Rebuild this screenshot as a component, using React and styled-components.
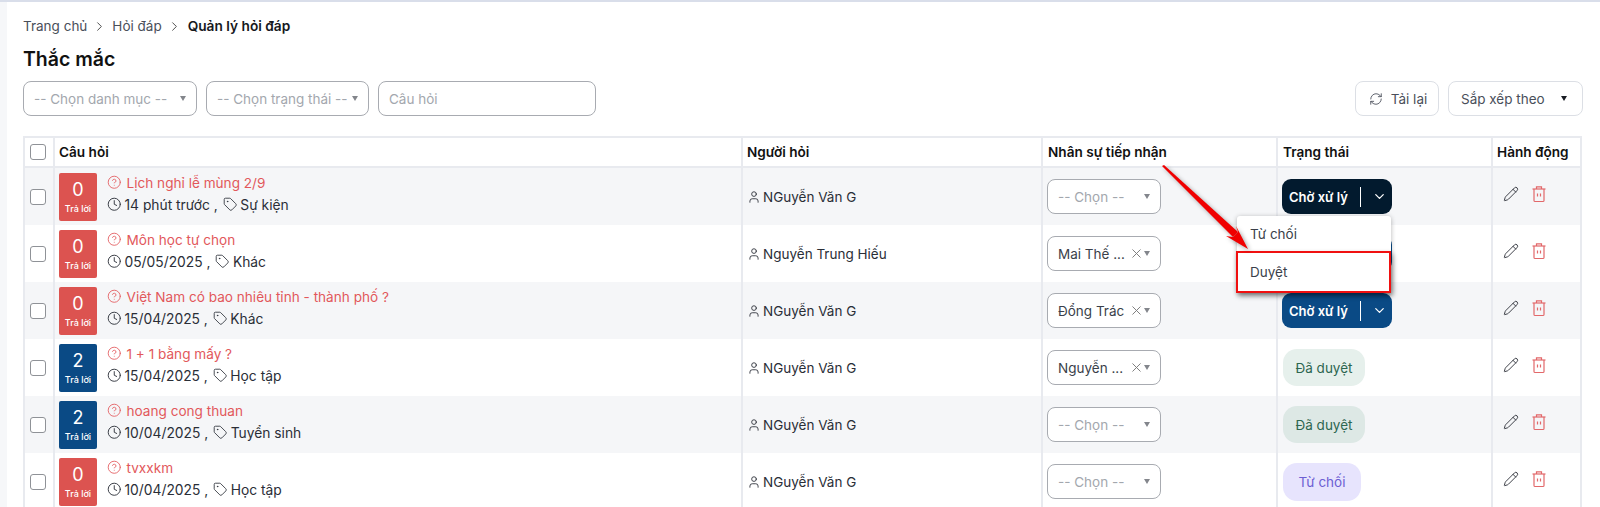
import styled, { createGlobalStyle } from 'styled-components';
import { ChevronDown, ChevronRight, CircleHelp, Clock, Pencil, RefreshCw, Tag, User, X } from 'lucide-react';

const GlobalStyle = createGlobalStyle`
  html, body {
    margin: 0;
    background: #fff;
    font-family: Inter, "Noto Sans", sans-serif;
    color: #1f2430;
  }
  * { box-sizing: border-box; }
`;

const Page = styled.div`
  position: relative;
  display: flex;
  height: 507px;
  overflow: hidden;
  border-top: 2px solid #d9deea;
`;

const SideStrip = styled.div`
  width: 7px;
  flex: none;
  background: #f6f7f9;
`;

const Main = styled.main`
  flex: 1;
  min-width: 0;
  padding: 15px 17px 0 16px;
`;

const Breadcrumb = styled.nav`
  display: flex;
  align-items: center;
  gap: 5px;
  height: 18px;
  font-size: 13.5px;
  color: #4a4f5a;
  svg { color: #444; }
`;

const Current = styled.span`
  margin-left: 1px;
  font-size: 13.7px;
  font-weight: 600;
  color: #16181d;
`;

const Title = styled.h1`
  margin: 11px 0 0;
  height: 26px;
  font-size: 19.5px;
  line-height: 26px;
  font-weight: 600;
  color: #111;
`;

const Toolbar = styled.div`
  display: flex;
  justify-content: space-between;
  margin-top: 9px;
`;

const ToolGroup = styled.div`
  display: flex;
  gap: 9px;
`;

const Field = styled.div`
  display: flex;
  align-items: center;
  justify-content: space-between;
  width: ${({ $w }) => $w}px;
  height: 35px;
  padding: 0 10px;
  border: 1px solid #a8abb1;
  border-radius: 8px;
  background: #fff;
  font-size: 13.5px;
  color: #a3a7ae;
  white-space: nowrap;
`;

const Caret = styled.span`
  flex: none;
  width: 0;
  height: 0;
  border-left: 3.5px solid transparent;
  border-right: 3.5px solid transparent;
  border-top: 5px solid ${({ $dark }) => ($dark ? '#1a1d24' : '#83868c')};
`;

const ToolButton = styled.button`
  display: flex;
  align-items: center;
  gap: 8px;
  height: 35px;
  width: ${({ $w }) => $w}px;
  padding: 0 ${({ $between }) => ($between ? 15 : 10)}px 0 12px;
  border: 1px solid #dcdfe5;
  border-radius: 8px;
  background: #fff;
  font: inherit;
  font-size: 13.5px;
  color: #4a4f5a;
  white-space: nowrap;
  justify-content: ${({ $between }) => ($between ? 'space-between' : 'center')};
`;

const Table = styled.div`
  width: 1559px;
  margin-top: 20px;
  border: solid #e8eaef;
  border-width: 2px 2px 0;
`;

const Row = styled.div`
  display: grid;
  grid-template-columns: 28px 688px 300px 235px 215px 89px;
  height: ${({ $head }) => ($head ? 28 : 57)}px;
  background: ${({ $shade }) => ($shade ? '#f5f6f8' : '#fff')};
  border-bottom: ${({ $head }) => ($head ? '2px solid #e8eaef' : 'none')};
  box-sizing: content-box;
`;

const Cell = styled.div`
  position: relative;
  display: flex;
  align-items: center;
  min-width: 0;
  padding-left: ${({ $pl }) => $pl ?? 4}px;
  border-left: ${({ $first }) => ($first ? 'none' : '2px solid #e8eaef')};
`;

const HeadText = styled.span`
  font-size: 13.6px;
  font-weight: 600;
  color: #111;
  white-space: nowrap;
`;

const Check = styled.span`
  width: 16px;
  height: 16px;
  border: 1px solid #8f9297;
  border-radius: 3px;
  background: #fff;
`;

const Badge = styled.div`
  display: flex;
  flex-direction: column;
  align-items: center;
  flex: none;
  width: 38px;
  height: 48px;
  padding-top: 6px;
  border-radius: 2px;
  color: #fff;
  background: ${({ $answered }) => ($answered ? '#0a4a85' : '#dc5350')};
`;

const Count = styled.span`
  font-size: 18px;
  line-height: 22px;
`;

const CountLabel = styled.span`
  margin-top: 2px;
  font-size: 9px;
  font-weight: 500;
  line-height: 12px;
`;

const Question = styled.div`
  display: flex;
  flex-direction: column;
  gap: 6px;
  margin: 0 0 6px 10px;
`;

const QuestionTitle = styled.div`
  display: flex;
  align-items: center;
  gap: 5px;
  height: 16px;
  font-size: 13.6px;
  color: #e2585b;
  white-space: nowrap;
`;

const Meta = styled.div`
  display: flex;
  align-items: center;
  height: 16px;
  font-size: 13.8px;
  color: #2a2e37;
  white-space: nowrap;
  svg { flex: none; }
`;

const MetaGap = styled.span`
  margin: 0 5px 0 3px;
`;

const Asker = styled.div`
  display: flex;
  align-items: center;
  gap: 2px;
  font-size: 13.5px;
  color: #2a2e37;
  white-space: nowrap;
`;

const PickText = styled.span`
  flex: 1;
  color: ${({ $empty }) => ($empty ? '#a3a7ae' : '#3a3f4a')};
`;

const StatusWrap = styled.div`
  position: relative;
`;

const StatusButton = styled.div`
  display: flex;
  align-items: center;
  width: 110px;
  height: 35px;
  padding-left: 7px;
  border-radius: 9px;
  background: ${({ $active }) => ($active ? '#021a2e' : '#0a4a85')};
  color: #fff;
  font-size: 13px;
  font-weight: 600;
  white-space: nowrap;
`;

const Divider = styled.span`
  width: 1px;
  height: 20px;
  margin: 0 11px 0 12px;
  background: #fff;
`;

const Pill = styled.span`
  display: flex;
  align-items: center;
  justify-content: center;
  width: ${({ $kind }) => ($kind === 'rejected' ? 78 : 82)}px;
  height: ${({ $kind }) => ($kind === 'rejected' ? 38 : 37)}px;
  margin-left: 1px;
  border-radius: 14px;
  font-size: 13.5px;
  background: ${({ $kind, $shade }) => {
    if ($kind === 'rejected') return '#e7e4fd';
    return $shade ? '#dde8e5' : '#e6f0ec';
  }};
  color: ${({ $kind }) => ($kind === 'rejected' ? '#6d5fd3' : '#2d6650')};
`;

const Menu = styled.div`
  position: absolute;
  top: 37px;
  left: -45px;
  z-index: 3;
  width: 154px;
  background: #fff;
  border-radius: 3px;
  box-shadow: 0 1px 5px rgba(0, 0, 0, 0.3);
`;

const MenuItem = styled.div`
  display: flex;
  align-items: center;
  height: ${({ $boxed }) => ($boxed ? 42 : 35)}px;
  padding-left: ${({ $boxed }) => ($boxed ? 12 : 13)}px;
  font-size: 13.5px;
  color: #3a3f4a;
  ${({ $boxed }) =>
    $boxed &&
    `
    margin-left: -1px;
    width: 155px;
    background: #fff;
    border: 2px solid #f01010;
    box-shadow: 2px 3px 5px rgba(0, 0, 0, 0.4);
  `}
`;

const Actions = styled.div`
  display: flex;
  align-items: center;
  gap: 12px;
  margin: -6px 0 0 6px;
  color: #30343c;
`;

const TrashIcon = styled.svg`
  color: #e2686a;
`;

const ArrowMark = styled.svg`
  position: absolute;
  left: 1155px;
  top: 158px;
  z-index: 5;
  filter: drop-shadow(2px 2px 2px rgba(0, 0, 0, 0.35));
`;

const rows = [
  { n: 0, q: 'Lịch nghỉ lễ mùng 2/9', time: '14 phút trước', tag: 'Sự kiện', who: 'NGuyễn Văn G', pick: '', status: 'active' },
  { n: 0, q: 'Môn học tự chọn', time: '05/05/2025', tag: 'Khác', who: 'Nguyễn Trung Hiếu', pick: 'Mai Thế ...', status: 'pending' },
  { n: 0, q: 'Việt Nam có bao nhiêu tỉnh - thành phố ?', time: '15/04/2025', tag: 'Khác', who: 'NGuyễn Văn G', pick: 'Đổng Trác', status: 'pending' },
  { n: 2, q: '1 + 1 bằng mấy ?', time: '15/04/2025', tag: 'Học tập', who: 'NGuyễn Văn G', pick: 'Nguyễn ...', status: 'approved' },
  { n: 2, q: 'hoang cong thuan', time: '10/04/2025', tag: 'Tuyển sinh', who: 'NGuyễn Văn G', pick: '', status: 'approved' },
  { n: 0, q: 'tvxxkm', time: '10/04/2025', tag: 'Học tập', who: 'NGuyễn Văn G', pick: '', status: 'rejected' },
];

function Trash() {
  return (
    <TrashIcon width="16" height="18" viewBox="0 0 16 18" fill="none" stroke="currentColor" strokeWidth="1.2">
      <path d="M1.5 4h13" />
      <path d="M5.5 4V1.8h5V4" />
      <path d="M3 4v11.4q0 1.1 1.1 1.1h7.8q1.1 0 1.1-1.1V4" />
      <path d="M6.5 8.5v3M9.5 8.5v3" />
    </TrashIcon>
  );
}

function Status({ row, shade }) {
  if (row.status === 'approved') return <Pill $shade={shade}>Đã duyệt</Pill>;
  if (row.status === 'rejected') return <Pill $kind="rejected">Từ chối</Pill>;
  return (
    <StatusWrap>
      <StatusButton $active={row.status === 'active'}>
        Chờ xử lý
        <Divider />
        <ChevronDown size={15} strokeWidth={2} />
      </StatusButton>
      {row.status === 'active' && (
        <Menu>
          <MenuItem>Từ chối</MenuItem>
          <MenuItem $boxed>Duyệt</MenuItem>
        </Menu>
      )}
    </StatusWrap>
  );
}

export default function App() {
  return (
    <Page>
      <GlobalStyle />
      <SideStrip />
      <Main>
        <Breadcrumb>
          <span>Trang chủ</span>
          <ChevronRight size={15} strokeWidth={1.5} />
          <span>Hỏi đáp</span>
          <ChevronRight size={15} strokeWidth={1.5} />
          <Current>Quản lý hỏi đáp</Current>
        </Breadcrumb>
        <Title>Thắc mắc</Title>

        <Toolbar>
          <ToolGroup>
            <Field $w={174}>
              -- Chọn danh mục --
              <Caret />
            </Field>
            <Field $w={163}>
              -- Chọn trạng thái --
              <Caret />
            </Field>
            <Field $w={218}>Câu hỏi</Field>
          </ToolGroup>
          <ToolGroup>
            <ToolButton $w={84}>
              <RefreshCw size={14} strokeWidth={1.5} />
              Tải lại
            </ToolButton>
            <ToolButton $w={135} $between>
              Sắp xếp theo
              <Caret $dark />
            </ToolButton>
          </ToolGroup>
        </Toolbar>

        <Table>
          <Row $head>
            <Cell $first $pl={5}><Check /></Cell>
            <Cell><HeadText>Câu hỏi</HeadText></Cell>
            <Cell><HeadText>Người hỏi</HeadText></Cell>
            <Cell $pl={5}><HeadText>Nhân sự tiếp nhận</HeadText></Cell>
            <Cell $pl={5}><HeadText>Trạng thái</HeadText></Cell>
            <Cell $pl={4}><HeadText>Hành động</HeadText></Cell>
          </Row>
          {rows.map((row, i) => {
            const shade = i % 2 === 0;
            return (
              <Row key={row.q} $shade={shade}>
                <Cell $first $pl={5}><Check /></Cell>
                <Cell>
                  <Badge $answered={row.n > 0}>
                    <Count>{row.n}</Count>
                    <CountLabel>Trả lời</CountLabel>
                  </Badge>
                  <Question>
                    <QuestionTitle>
                      <CircleHelp size={14.5} strokeWidth={1.4} />
                      {row.q}
                    </QuestionTitle>
                    <Meta>
                      <Clock size={14.5} strokeWidth={1.5} />
                      <MetaGap>{row.time} ,</MetaGap>
                      <Tag size={14.5} strokeWidth={1.4} />
                      <MetaGap>{row.tag}</MetaGap>
                    </Meta>
                  </Question>
                </Cell>
                <Cell>
                  <Asker>
                    <User size={14} strokeWidth={1.5} />
                    {row.who}
                  </Asker>
                </Cell>
                <Cell $pl={4}>
                  <Field $w={114}>
                    <PickText $empty={!row.pick}>{row.pick || '-- Chọn --'}</PickText>
                    {row.pick && <X size={15} strokeWidth={1.5} color="#777" />}
                    <Caret />
                  </Field>
                </Cell>
                <Cell $pl={4}>
                  <Status row={row} shade={shade} />
                </Cell>
                <Cell>
                  <Actions>
                    <Pencil size={16} strokeWidth={1.4} />
                    <Trash />
                  </Actions>
                </Cell>
              </Row>
            );
          })}
        </Table>
      </Main>
      <ArrowMark width="100" height="100" viewBox="0 0 100 100">
        <polygon points="7,6 9,5 83,72 78,77" fill="#f00000" />
        <polygon points="93,89 71,76 78,77 83,72 81,66" fill="#f00000" />
      </ArrowMark>
    </Page>
  );
}
